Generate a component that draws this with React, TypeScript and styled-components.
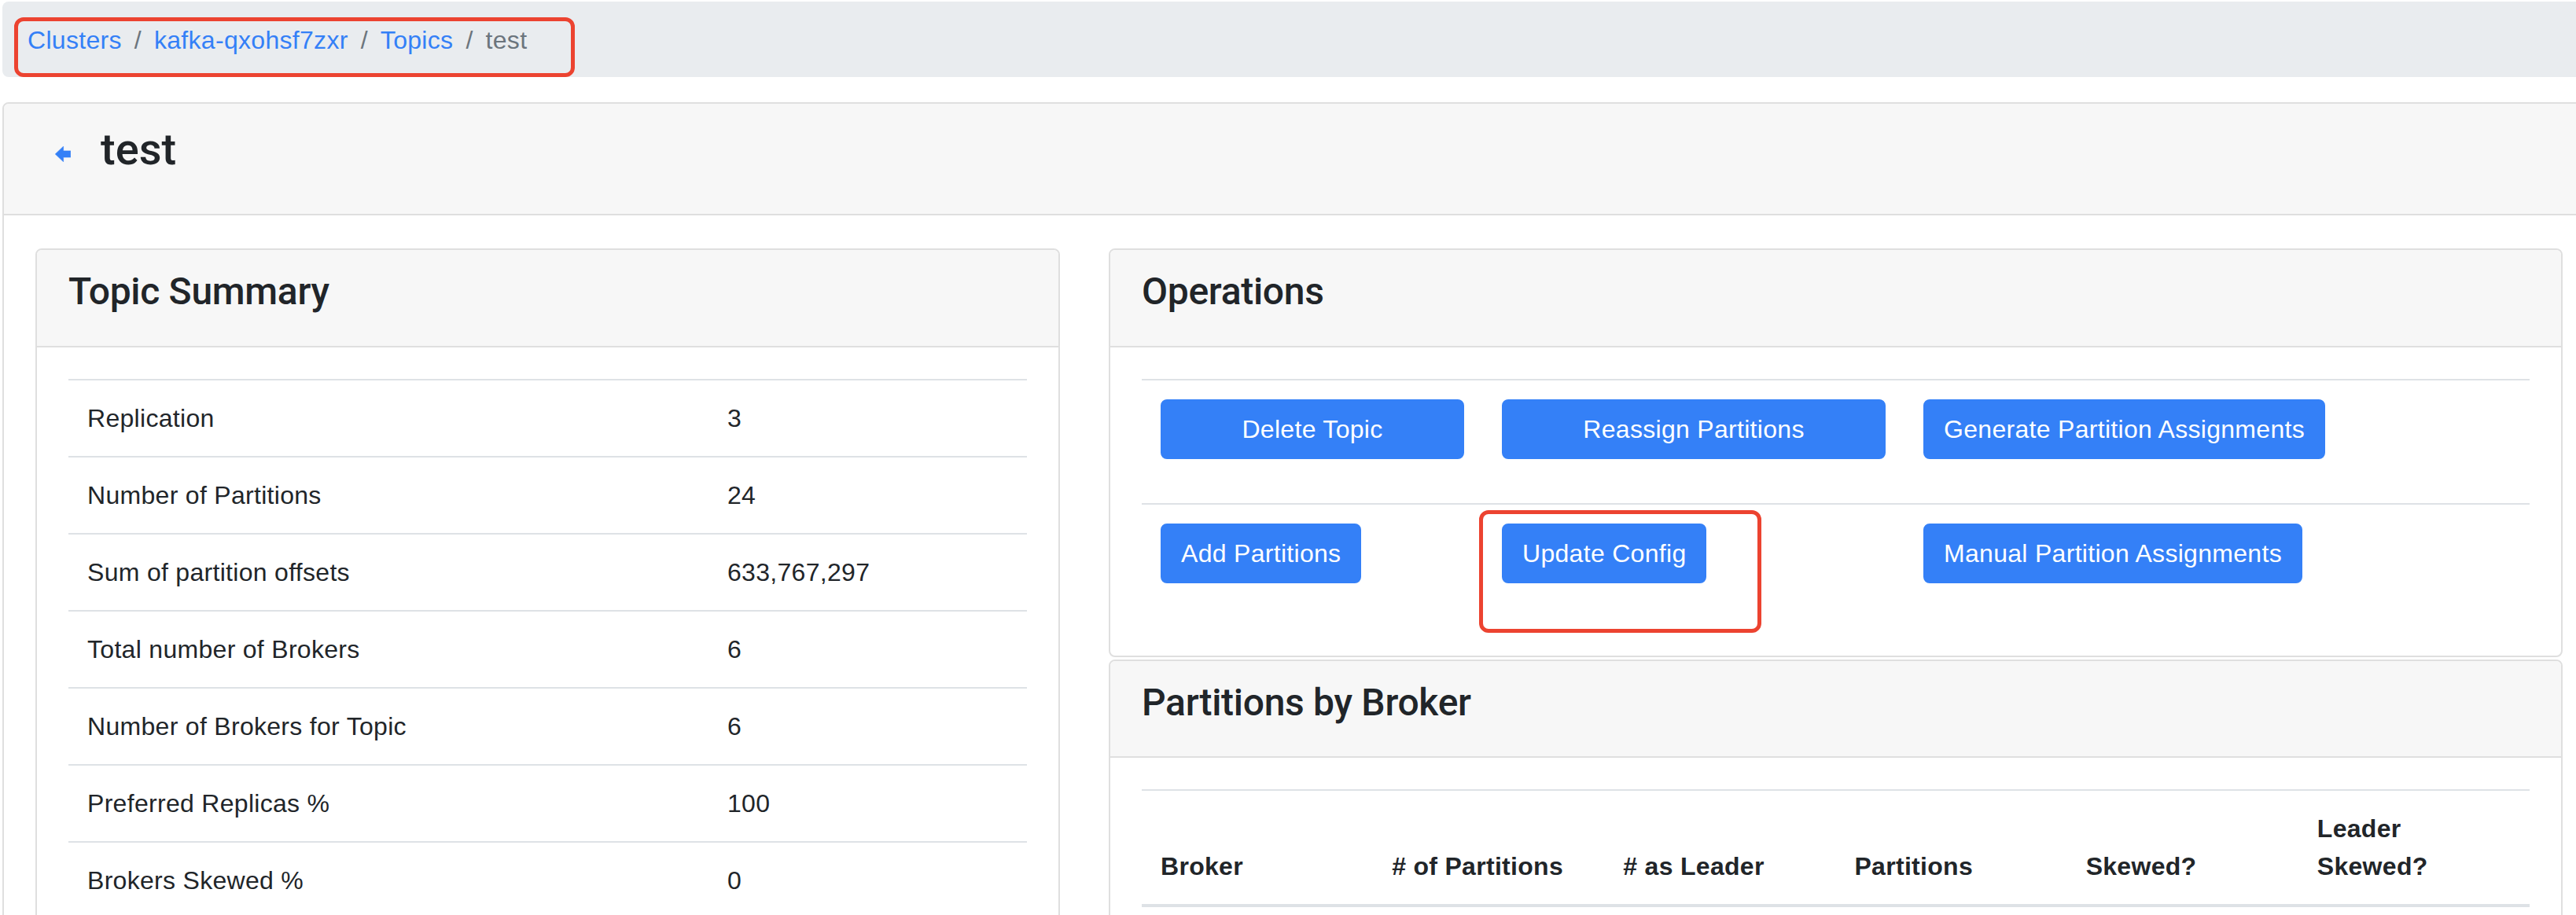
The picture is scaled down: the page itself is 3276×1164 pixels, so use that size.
import React from "react";
import styled, { createGlobalStyle } from "styled-components";

const GlobalStyle = createGlobalStyle`
  * { box-sizing: border-box; }
  html, body {
    margin: 0;
    padding: 0;
    background: #ffffff;
    overflow: hidden;
  }
  body {
    font-family: "Liberation Sans", Arial, sans-serif;
    font-size: 32px;
    line-height: 1.5;
    letter-spacing: 0.3px;
    color: #212529;
  }
`;

const BLUE = "#3480f7";
const RED = "#ec4330";

const Page = styled.div`
  width: 3301px;
  padding: 2px 0 0 3px;
`;

/* ---------- breadcrumb ---------- */

const Breadcrumb = styled.nav`
  position: relative;
  display: flex;
  align-items: center;
  height: 96px;
  padding: 1px 32px 0;
  margin-bottom: 32px;
  background: #e9ecef;
  border-radius: 8px;
`;

const Crumb = styled.a<{ $active?: boolean }>`
  color: ${(p) => (p.$active ? "#6c757d" : BLUE)};
  text-decoration: none;
  line-height: 48px;
`;

const Separator = styled.span`
  color: #6c757d;
  padding: 0 16px;
  line-height: 48px;
`;

const BreadcrumbMark = styled.div`
  position: absolute;
  left: 15px;
  top: 20px;
  width: 713px;
  height: 76px;
  border: 5px solid ${RED};
  border-radius: 12px;
  pointer-events: none;
`;

/* ---------- outer card ---------- */

const Shell = styled.section`
  border: 2px solid #dfdfdf;
  border-radius: 8px;
  background: #ffffff;
`;

const ShellHeader = styled.header`
  display: flex;
  align-items: flex-start;
  height: 142px;
  padding: 24px 40px;
  background: #f7f7f7;
  border-bottom: 2px solid #dfdfdf;
  border-radius: 6px 6px 0 0;
`;

const BackLink = styled.a`
  display: flex;
  padding: 30px 38px 0 25px;
  color: ${BLUE};
`;

const PageTitle = styled.h3`
  margin: 0;
  padding-top: 1px;
  font-family: Roboto, "Liberation Sans", Arial, sans-serif;
  font-size: 56px;
  line-height: 1.2;
  font-weight: 500;
  letter-spacing: 0;
  color: #212529;
`;

const ShellBody = styled.div`
  padding: 42px 40px 40px;
`;

const Columns = styled.div`
  display: grid;
  grid-template-columns: 1303px 1849px;
  column-gap: 62px;
  align-items: start;
`;

const Stack = styled.div`
  display: flex;
  flex-direction: column;
  gap: 3px;
`;

/* ---------- cards ---------- */

const Card = styled.div`
  border: 2px solid #dfdfdf;
  border-radius: 8px;
  background: #ffffff;
  overflow: hidden;
`;

const CardHeader = styled.div`
  padding: 24px 40px;
  background: #f7f7f7;
  border-bottom: 2px solid #dfdfdf;
`;

const CardTitle = styled.h4`
  margin: 0 0 16px;
  font-family: Roboto, "Liberation Sans", Arial, sans-serif;
  font-size: 48px;
  line-height: 1.2;
  font-weight: 500;
  letter-spacing: -0.3px;
  color: #212529;
`;

const CardBody = styled.div<{ $bottom?: number }>`
  padding: 40px 40px ${(p) => (p.$bottom ?? 40)}px;
`;

/* ---------- tables ---------- */

const Table = styled.table<{ $fixed?: boolean }>`
  width: 100%;
  border-collapse: collapse;
  table-layout: ${(p) => (p.$fixed ? "fixed" : "auto")};
`;

const Col = styled.col<{ $w?: number }>`
  width: ${(p) => (p.$w ? `${p.$w}px` : "auto")};
`;

const Td = styled.td`
  position: relative;
  padding: 24px;
  border-top: 2px solid #dee2e6;
  vertical-align: top;
  line-height: 48px;
  text-align: left;
`;

const Th = styled.th`
  padding: 24px;
  border-top: 2px solid #dee2e6;
  border-bottom: 4px solid #dee2e6;
  vertical-align: bottom;
  line-height: 48px;
  font-weight: 700;
  text-align: left;
`;

/* ---------- buttons ---------- */

const ActionForm = styled.div`
  margin-bottom: 32px;
`;

const Button = styled.button<{ $block?: boolean }>`
  display: ${(p) => (p.$block ? "block" : "inline-block")};
  width: ${(p) => (p.$block ? "100%" : "auto")};
  margin: 0;
  padding: 12px 24px;
  font-family: "Liberation Sans", Arial, sans-serif;
  font-size: 32px;
  line-height: 48px;
  letter-spacing: 0.3px;
  color: #ffffff;
  background: ${BLUE};
  border: 2px solid ${BLUE};
  border-radius: 8px;
  text-align: center;
  cursor: pointer;
`;

const ConfigMark = styled.div`
  position: absolute;
  left: -5px;
  top: 7px;
  width: 359px;
  height: 156px;
  border: 5px solid ${RED};
  border-radius: 12px;
  pointer-events: none;
`;

/* ---------- icon ---------- */

const BackArrow = () => (
  <svg width="20" height="20" viewBox="0 0 20 20" aria-hidden="true">
    <path
      d="M0.3 10 L10.6 0.2 L10.6 5.9 L19.8 5.9 L19.8 14.1 L10.6 14.1 L10.6 19.8 Z"
      fill="currentColor"
      stroke="currentColor"
      strokeWidth="0.6"
      strokeLinejoin="round"
    />
  </svg>
);

/* ---------- data ---------- */

const summary: [string, string][] = [
  ["Replication", "3"],
  ["Number of Partitions", "24"],
  ["Sum of partition offsets", "633,767,297"],
  ["Total number of Brokers", "6"],
  ["Number of Brokers for Topic", "6"],
  ["Preferred Replicas %", "100"],
  ["Brokers Skewed %", "0"],
];

const brokerColumns = [
  "Broker",
  "# of Partitions",
  "# as Leader",
  "Partitions",
  "Skewed?",
  "Leader Skewed?",
];

export default function App() {
  return (
    <>
      <GlobalStyle />
      <Page>
        <Breadcrumb aria-label="breadcrumb">
          <Crumb href="#">Clusters</Crumb>
          <Separator>/</Separator>
          <Crumb href="#">kafka-qxohsf7zxr</Crumb>
          <Separator>/</Separator>
          <Crumb href="#">Topics</Crumb>
          <Separator>/</Separator>
          <Crumb $active>test</Crumb>
          <BreadcrumbMark />
        </Breadcrumb>

        <Shell>
          <ShellHeader>
            <BackLink href="#" aria-label="back">
              <BackArrow />
            </BackLink>
            <PageTitle>test</PageTitle>
          </ShellHeader>

          <ShellBody>
            <Columns>
              <Card>
                <CardHeader>
                  <CardTitle>Topic Summary</CardTitle>
                </CardHeader>
                <CardBody>
                  <Table>
                    <colgroup>
                      <Col $w={814} />
                      <Col />
                    </colgroup>
                    <tbody>
                      {summary.map(([label, value]) => (
                        <tr key={label}>
                          <Td>{label}</Td>
                          <Td>{value}</Td>
                        </tr>
                      ))}
                    </tbody>
                  </Table>
                </CardBody>
              </Card>

              <Stack>
                <Card>
                  <CardHeader>
                    <CardTitle>Operations</CardTitle>
                  </CardHeader>
                  <CardBody $bottom={36}>
                    <Table>
                      <colgroup>
                        <Col $w={434} />
                        <Col $w={536} />
                        <Col />
                      </colgroup>
                      <tbody>
                        <tr>
                          <Td>
                            <ActionForm>
                              <Button $block>Delete Topic</Button>
                            </ActionForm>
                          </Td>
                          <Td>
                            <ActionForm>
                              <Button $block>Reassign Partitions</Button>
                            </ActionForm>
                          </Td>
                          <Td>
                            <ActionForm>
                              <Button>Generate Partition Assignments</Button>
                            </ActionForm>
                          </Td>
                        </tr>
                        <tr>
                          <Td>
                            <ActionForm>
                              <Button>Add Partitions</Button>
                            </ActionForm>
                          </Td>
                          <Td>
                            <ActionForm>
                              <Button>Update Config</Button>
                            </ActionForm>
                            <ConfigMark />
                          </Td>
                          <Td>
                            <ActionForm>
                              <Button>Manual Partition Assignments</Button>
                            </ActionForm>
                          </Td>
                        </tr>
                      </tbody>
                    </Table>
                  </CardBody>
                </Card>

                <Card>
                  <CardHeader>
                    <CardTitle>Partitions by Broker</CardTitle>
                  </CardHeader>
                  <CardBody>
                    <Table $fixed>
                      <thead>
                        <tr>
                          {brokerColumns.map((c) => (
                            <Th key={c}>{c}</Th>
                          ))}
                        </tr>
                      </thead>
                    </Table>
                  </CardBody>
                </Card>
              </Stack>
            </Columns>
          </ShellBody>
        </Shell>
      </Page>
    </>
  );
}
